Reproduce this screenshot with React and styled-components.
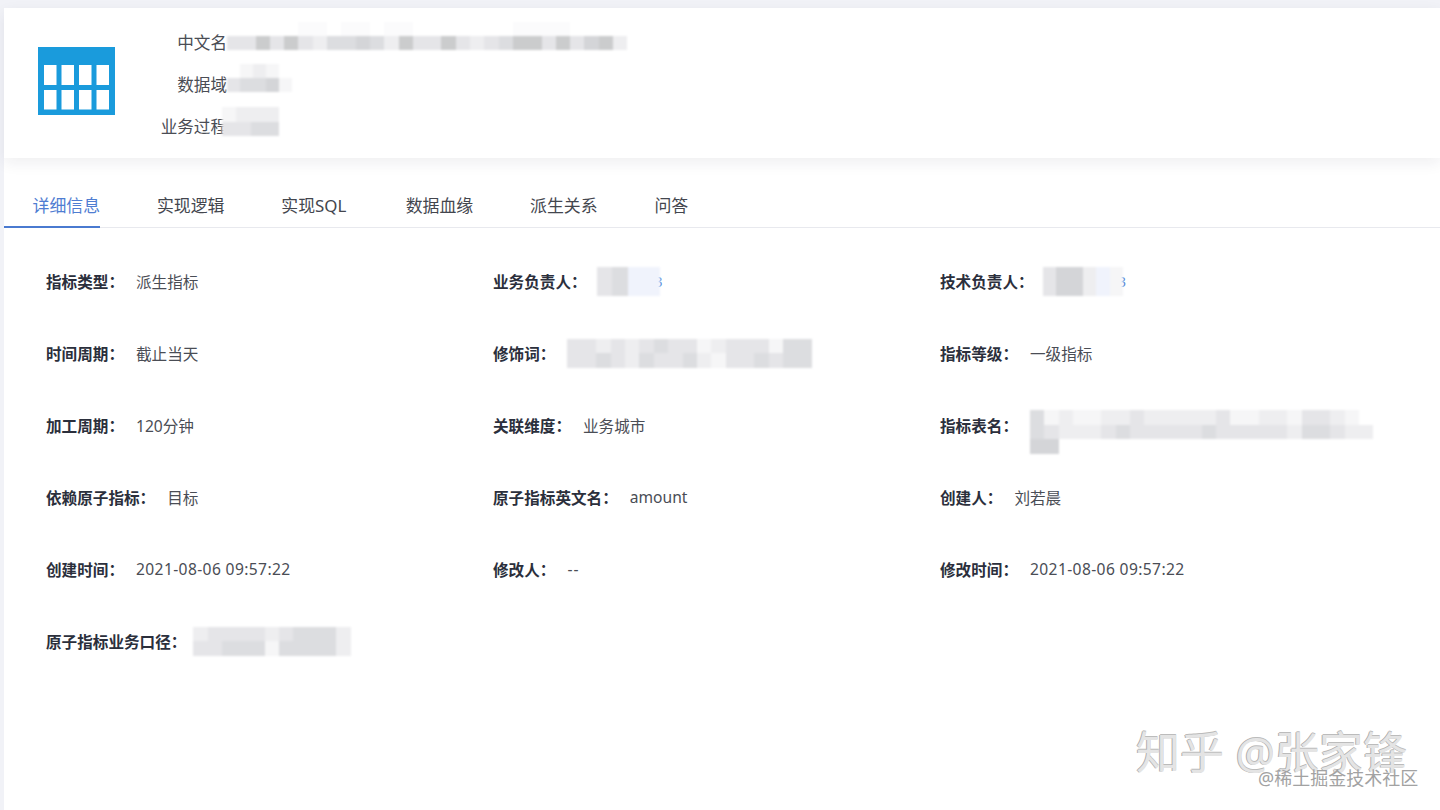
import React from "react";
import styled, { createGlobalStyle } from "styled-components";

const GlobalStyle = createGlobalStyle`
    html, body {
        margin: 0;
        padding: 0;
        background: #f1f2f7;
    }
    body {
        font-family: "Noto Sans", "Noto Sans CJK SC", sans-serif;
    }
`

const Page = styled.div`
    position: relative;
    width: 1440px;
    height: 810px;
    padding: 8px 0 0 4px;
    box-sizing: border-box;
    overflow: hidden;
`
const Content = styled.div`
    height: 802px;
    background-color: #ffffff;
`
const Header = styled.div`
    display: flex;
    height: 150px;
    padding: 39px 0 0 34px;
    box-sizing: border-box;
    background-color: #ffffff;
    box-shadow: 0 5px 14px rgba(30, 35, 60, 0.07);
`
const Meta = styled.div`
    display: flex;
    flex-direction: column;
    margin: -26px 0 0 32px;
`
const MetaRow = styled.div`
    display: flex;
    align-items: center;
    height: 42px;
`
const MetaLabel = styled.div`
    width: 80px;
    flex-shrink: 0;
    text-align: right;
    font-size: 16.6px;
    color: #4a4d55;
`
const Tabs = styled.div`
    display: flex;
    gap: 28.4px;
    height: 69px;
    align-items: flex-end;
    border-bottom: 1px solid #e8e9ee;
`
const Tab = styled.div`
    display: flex;
    align-items: center;
    width: 96px;
    height: 42px;
    box-sizing: border-box;
    padding: 0 0 4px 28.5px;
    font-size: 16.9px;
    white-space: nowrap;
    color: ${props => (props.$active ? "#4f7dd2" : "#43464e")};
    border-bottom: 2px solid ${props => (props.$active ? "#4a7ad0" : "transparent")};
    margin-bottom: -1px;
`
const Details = styled.div`
    display: grid;
    grid-template-columns: repeat(3, 447px);
    grid-auto-rows: 36px;
    row-gap: 36px;
    padding: 35px 0 0 42px;
`
const Item = styled.div`
    display: flex;
    align-items: center;
    gap: 12px;
    font-size: 15.6px;
    white-space: nowrap;
`
const ItemLabel = styled.span`
    font-weight: 700;
    color: #2b2f3c;
`
const ItemValue = styled.span`
    color: #4a4d55;
    letter-spacing: ${props => props.$tracking || 0}px;
`
const MosaicBox = styled.div`
    position: relative;
    display: flex;
    flex-direction: column;
    flex-shrink: 0;
    filter: blur(1px);
    margin: ${props => props.$margin || "0"};
    align-self: ${props => (props.$top ? "flex-start" : "center")};
`
const MosaicRow = styled.div`
    display: flex;
`
const MosaicCell = styled.div`
    width: ${props => props.$w}px;
    height: ${props => props.$h}px;
`
const LinkScrap = styled.span`
    margin-left: -17px;
    color: #4f7dd2;
    font-size: 14px;
`
const WatermarkMain = styled.div`
    position: absolute;
    left: 1136px;
    top: 727px;
    font-size: 44px;
    line-height: 50px;
    white-space: nowrap;
    color: #e4e4e4;
    text-shadow: -1px 0 0 #aeaeae, 0 -1px 0 #bcbcbc;
`
const WatermarkSub = styled.div`
    position: absolute;
    left: 1258px;
    top: 765px;
    font-size: 18px;
    line-height: 26px;
    white-space: nowrap;
    color: #a2a2a2;
`

const TableIcon = () => (
    <svg width="77" height="68" viewBox="0 0 77 68">
        <rect width="77" height="68" fill="#1a9bdc" />
        {[6, 23.5, 41, 58.5].map(x => (
            <g key={x} fill="#ffffff">
                <rect x={x} y="18" width="12.5" height="20" />
                <rect x={x} y="43" width="12.5" height="19.5" />
            </g>
        ))}
    </svg>
);

// rows of grey colours, one pixel block of the blurred-out text each
const Mosaic = ({ rows, w = 14.3, h = 14.5, margin, top }) => (
    <MosaicBox $margin={margin} $top={top}>
        {rows.map((row, i) => (
            <MosaicRow key={i}>
                {row.map((color, j) => (
                    <MosaicCell key={j} $w={w} $h={h} style={{ background: color }} />
                ))}
            </MosaicRow>
        ))}
    </MosaicBox>
);

const n = "#ffffff";
const z = "#fbfbfc";
const a = "#f6f6f7";
const b = "#eeeef0";
const c = "#e5e5e8";
const d = "#dcdde0";
const e = "#d4d5d8";
const f = "#cbcccd";
const u = "#f0f3fc";

const nameRows = [
    [n, n, n, n, n, z, z, n, z, z, n, z, z, n, n, n, n, n, n, n, z, z, z, z, n, n, n, n],
    [c, c, f, c, f, c, b, d, d, e, d, b, f, c, c, f, c, b, c, d, f, f, c, f, c, e, f, b],
];
const domainRows = [
    [n, a, b, a, n],
    [c, d, d, e, a],
];
const processRows = [
    [a, b, b, b],
    [c, c, d, d],
];
const ownerRows = [
    [c, d, u, u],
    [c, d, u, u],
];
const techRows = [
    [c, e, e, b, u, a],
    [c, e, e, b, u, a],
];
const modifierRows = [
    [c, c, b, c, b, c, d, c, c, a, b, c, c, c, a, d, d],
    [c, c, d, c, b, d, c, c, d, b, a, c, c, d, c, d, d],
];
const tableRows = [
    [d, a, b, a, a, b, b, c, b, b, b, b, b, c, a, a, b, b, a, c, c, b, a, n],
    [d, c, b, b, b, c, d, c, c, c, c, c, d, c, c, c, c, c, b, d, d, c, b, b],
    [e, e],
];
const caliberRows = [
    [b, c, c, c, c, b, c, d, d, d, b],
    [c, c, d, d, d, a, d, d, d, d, b],
];

const items = [
    { label: "指标类型：", value: "派生指标" },
    { label: "业务负责人：", rows: ownerRows, w: 15.75, margin: "0 0 0 -2px", scrap: "3" },
    { label: "技术负责人：", rows: techRows, w: 13.4, margin: "0 0 0 -3px", scrap: "3" },
    { label: "时间周期：", value: "截止当天" },
    { label: "修饰词：", rows: modifierRows, w: 14.4 },
    { label: "指标等级：", value: "一级指标" },
    { label: "加工周期：", value: "120分钟" },
    { label: "关联维度：", value: "业务城市" },
    { label: "指标表名：", rows: tableRows, top: true, margin: "3px 0 0 0" },
    { label: "依赖原子指标：", value: "目标" },
    { label: "原子指标英文名：", value: "amount" },
    { label: "创建人：", value: "刘若晨" },
    { label: "创建时间：", value: "2021-08-06 09:57:22", tracking: 0.38 },
    { label: "修改人：", value: "--", tracking: 1 },
    { label: "修改时间：", value: "2021-08-06 09:57:22", tracking: 0.38 },
    { label: "原子指标业务口径：", rows: caliberRows, margin: "0 0 0 -5px" },
];

const tabs = ["详细信息", "实现逻辑", "实现SQL", "数据血缘", "派生关系", "问答"];

const App = () => {
    return (
        <Page>
            <GlobalStyle />
            <Content>
                <Header>
                    <TableIcon />
                    <Meta>
                        <MetaRow>
                            <MetaLabel>中文名</MetaLabel>
                            <Mosaic rows={nameRows} h={14} top margin="1px 0 0 0" />
                        </MetaRow>
                        <MetaRow>
                            <MetaLabel>数据域</MetaLabel>
                            <Mosaic rows={domainRows} h={14} w={13} margin="0 0 12px 0" />
                        </MetaRow>
                        <MetaRow>
                            <MetaLabel>业务过程</MetaLabel>
                            <Mosaic rows={processRows} margin="0 0 9px -5px" />
                        </MetaRow>
                    </Meta>
                </Header>
                <Tabs>
                    {tabs.map((tab, i) => (
                        <Tab key={tab} $active={i === 0}>{tab}</Tab>
                    ))}
                </Tabs>
                <Details>
                    {items.map(item => (
                        <Item key={item.label}>
                            <ItemLabel>{item.label}</ItemLabel>
                            {item.rows ? (
                                <Mosaic rows={item.rows} w={item.w} margin={item.margin} top={item.top} />
                            ) : (
                                <ItemValue $tracking={item.tracking}>{item.value}</ItemValue>
                            )}
                            {item.scrap && <LinkScrap>{item.scrap}</LinkScrap>}
                        </Item>
                    ))}
                </Details>
            </Content>
            <WatermarkMain>知乎 @张家锋</WatermarkMain>
            <WatermarkSub>@稀土掘金技术社区</WatermarkSub>
        </Page>
    );
};

export default App;
